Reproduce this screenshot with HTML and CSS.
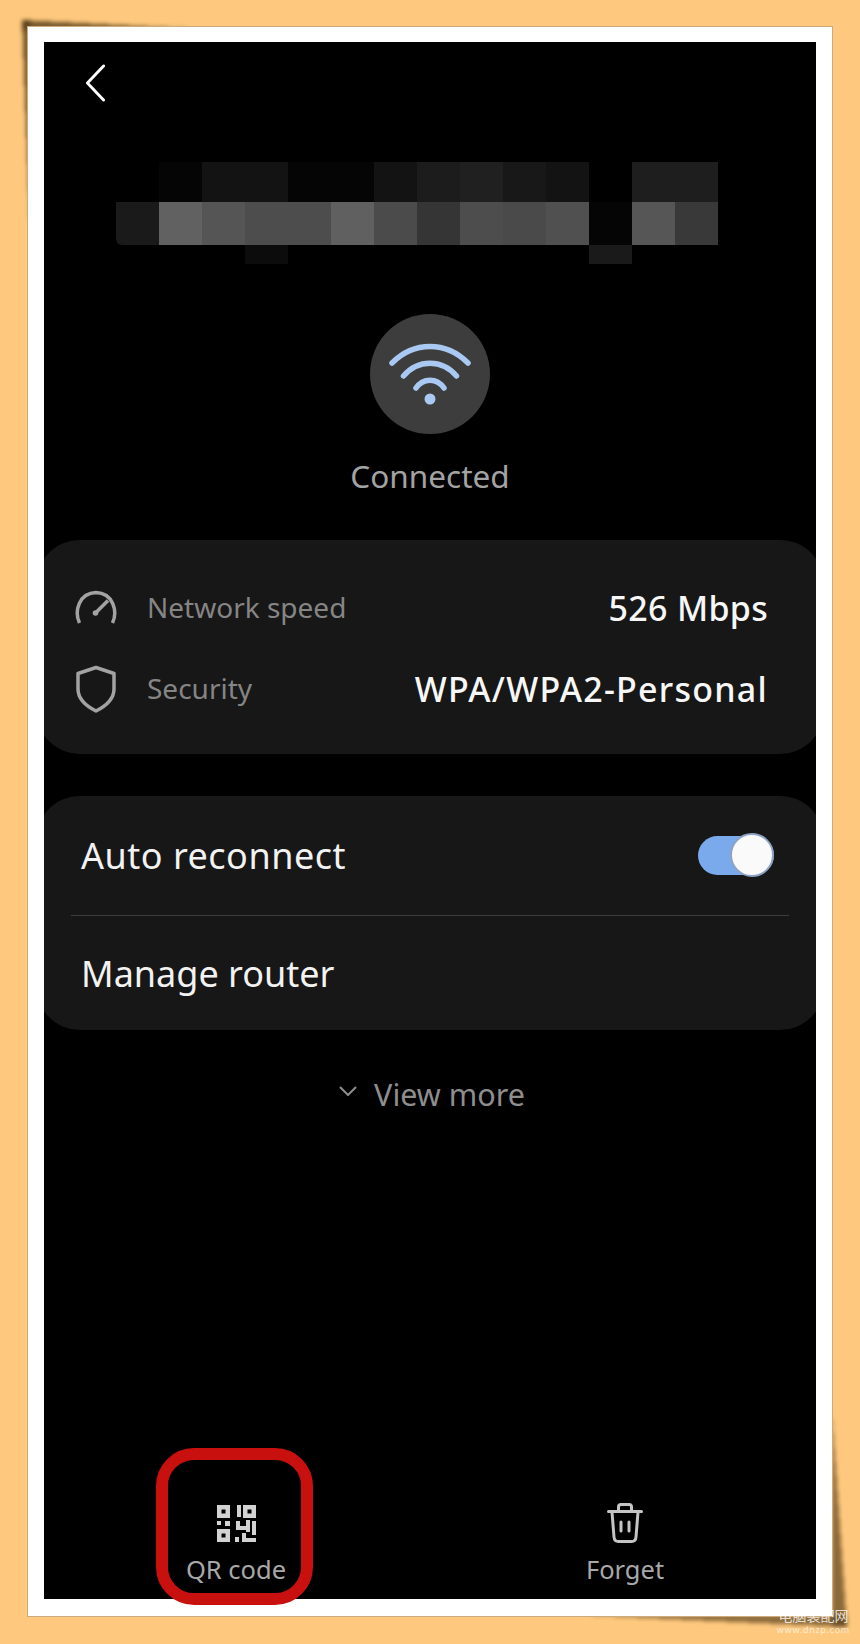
FILE: index.html
```html
<!DOCTYPE html>
<html lang="en">
<head>
<meta charset="utf-8">
<title>Wi-Fi network details</title>
<link rel="stylesheet" href="styles.css">
</head>
<body>
<div class="frame">
  <main class="screen">
    <div class="topbar">
      <svg class="back" viewBox="0 0 22 40" aria-hidden="true"><path d="M20 2 L3 20 L20 38"/></svg>
    </div>
    <div class="mosaic" aria-hidden="true">
      <i></i><i class="a"></i><i class="b"></i><i class="b"></i><i class="a"></i><i class="a"></i><i class="b"></i><i class="c"></i><i class="d"></i><i class="e"></i><i class="b"></i><i></i><i class="f"></i><i class="f"></i>
      <i class="g rl"></i><i class="m1"></i><i class="m2"></i><i class="m3"></i><i class="m3"></i><i class="m4"></i><i class="m5"></i><i class="m6"></i><i class="m3"></i><i class="m7"></i><i class="m8"></i><i class="a"></i><i class="m9"></i><i class="m10"></i>
      <i></i><i></i><i></i><i class="k"></i><i></i><i></i><i></i><i></i><i></i><i></i><i></i><i class="g"></i><i></i><i></i>
    </div>
    <div class="wifi-badge">
      <svg viewBox="0 0 120 120" aria-hidden="true">
        <path d="M22 49 C44 27 76 27 98 49"/>
        <path d="M33.500 62 C48 45 72 45 86.500 62"/>
        <path d="M46 74 C53 63.500 67 63.500 74 74"/>
        <circle cx="60" cy="85" r="5.500"/>
      </svg>
    </div>
    <p class="status">Connected</p>

    <div class="card-clip info-clip">
      <section class="card info">
        <div class="info-row">
          <svg class="info-icon" viewBox="0 0 48 48" aria-hidden="true">
            <path d="M7.500 39 C2 27 7 9 24 8.500 C41 9 46 27 40.500 39"/>
            <path d="M24 28.500 L36 16.500"/>
            <circle cx="23.500" cy="29" r="2.800" class="solid"/>
          </svg>
          <span class="label">Network speed</span>
          <span class="value speed">526 Mbps</span>
        </div>
        <div class="info-row">
          <svg class="info-icon" viewBox="0 0 48 48" aria-hidden="true">
            <path d="M24 2.500 L42 8.500 V24 C42 34 33 41.500 24 46 C15 41.500 6 34 6 24 V8.500 Z"/>
          </svg>
          <span class="label">Security</span>
          <span class="value wide">WPA/WPA2-Personal</span>
        </div>
      </section>
    </div>

    <div class="card-clip options-clip">
      <section class="card options">
        <div class="option first">
          <span class="auto">Auto reconnect</span>
          <span class="toggle"><span class="thumb"></span></span>
        </div>
        <hr class="divider">
        <div class="option second"><span>Manage router</span></div>
      </section>
    </div>

    <div class="more">
      <svg viewBox="0 0 18 10" aria-hidden="true"><path d="M1 1 L9 9 L17 1"/></svg>
      <span>View more</span>
    </div>

    <footer class="actions">
      <div class="action qr">
        <svg class="qr-icon" viewBox="0 0 39 37" aria-hidden="true">
          <path fill-rule="evenodd" d="M0 0H13V13H0ZM4.500 4.500V8.500H8.500V4.500Z"/>
          <path fill-rule="evenodd" d="M26 0H39V13H26ZM30.500 4.500V8.500H34.500V4.500Z"/>
          <path fill-rule="evenodd" d="M0 24H13V37H0ZM4.500 28.500V32.500H8.500V28.500Z"/>
          <path d="M20 0H24V12H20Z"/>
          <path d="M0 16H4V20H0ZM8 16H13V21H8Z"/>
          <path d="M19 16H23V21H29V15H33V27H29V25H19ZM35 16H39V30H35ZM18 32H22V37H18ZM25 28H29V33H39V37H25Z"/>
        </svg>
        <span>QR code</span>
        <span class="ring"></span>
      </div>
      <div class="action forget">
        <svg class="trash" viewBox="0 0 36 40" aria-hidden="true">
          <path d="M1.500 8.500 H34.500"/>
          <path d="M11.500 8 V4 C11.500 2.500 12.500 1.500 14 1.500 H22 C23.500 1.500 24.500 2.500 24.500 4 V8"/>
          <path d="M5 9 L7 34 C7.200 36.800 9 38.500 11.500 38.500 H24.500 C27 38.500 28.800 36.800 29 34 L31 9"/>
          <path d="M14 19 V28 M22 19 V28"/>
        </svg>
        <span>Forget</span>
      </div>
    </footer>
  </main>
</div>
<div class="watermark"><span class="wm-cn">电脑装配网</span><span class="wm-en">www.dnzp.com</span></div>
</body>
</html>
```

FILE: styles.css
```css
html, body { margin: 0; padding: 0; height: 1644px; overflow: hidden; }
body {
  position: relative;
  background: #fec97e;
  padding: 27px 0 0 28px;
  box-sizing: border-box;
  font-family: "Noto Sans", "Liberation Sans", sans-serif;
}
.frame {
  position: relative;
  width: 804px;
  height: 1589px;
  box-sizing: border-box;
  padding: 15px 16px 17px;
  background: #fff;
  box-shadow: 0 0 0 1px #cbab7e;
}
.frame::before {
  content: "";
  position: absolute;
  z-index: -1;
  left: -6px;
  top: -7px;
  width: 180px;
  height: 215px;
  filter: blur(2px);
  background:
    linear-gradient(to top right, rgba(85, 60, 25, .8) 50%, rgba(85, 60, 25, 0) 50%) 0 0 / 175px 9px no-repeat,
    linear-gradient(to bottom left, rgba(85, 60, 25, .8) 50%, rgba(85, 60, 25, 0) 50%) 0 0 / 8px 210px no-repeat;
}
.frame::after {
  content: "";
  position: absolute;
  z-index: -1;
  right: -15px;
  bottom: -11px;
  width: 270px;
  height: 220px;
  filter: blur(2px);
  background:
    linear-gradient(to top right, rgba(90, 65, 30, .7) 50%, rgba(90, 65, 30, 0) 50%) 100% 100% / 15px 215px no-repeat,
    linear-gradient(to bottom left, rgba(90, 65, 30, .7) 50%, rgba(90, 65, 30, 0) 50%) 100% 100% / 265px 12px no-repeat;
}
.screen {
  height: 1557px;
  background: #000;
  display: flex;
  flex-direction: column;
}
.topbar { padding: 22px 0 0 40px; height: 38px; }
.back { display: block; width: 22px; height: 38px; }
.back path { fill: none; stroke: #fff; stroke-width: 3; stroke-linecap: round; stroke-linejoin: round; }

.mosaic {
  margin: 60px 0 0 72px;
  width: 602px;
  display: grid;
  grid-template-columns: repeat(14, 43px);
  grid-template-rows: 40px 43px 19px;
}
.mosaic i { display: block; }
.mosaic .a { background: #050505; }
.mosaic .b { background: #131313; }
.mosaic .c { background: #1c1c1c; }
.mosaic .d { background: #202020; }
.mosaic .e { background: #181818; }
.mosaic .f { background: #1e1e1e; }
.mosaic .g { background: #1a1a1a; }
.mosaic .k { background: #0c0c0c; }
.mosaic .rl { border-bottom-left-radius: 6px; }
.mosaic .m1 { background: #616161; }
.mosaic .m2 { background: #555; }
.mosaic .m3 { background: #4d4d4d; }
.mosaic .m4 { background: #606060; }
.mosaic .m5 { background: #4b4b4b; }
.mosaic .m6 { background: #353535; }
.mosaic .m7 { background: #4a4a4a; }
.mosaic .m8 { background: #505050; }
.mosaic .m9 { background: #565656; }
.mosaic .m10 { background: #393939; }

.wifi-badge {
  width: 120px;
  height: 120px;
  margin: 50px auto 0;
  border-radius: 50%;
  background: #3d3d3d;
}
.wifi-badge svg { display: block; width: 120px; height: 120px; }
.wifi-badge path { fill: none; stroke: #a9c8f2; stroke-width: 5.500; stroke-linecap: round; }
.wifi-badge circle { fill: #a9c8f2; }
.status {
  margin: 20px 0 1px;
  text-align: center;
  font-size: 31.500px;
  line-height: 44px;
  color: #a3a3a3;
}

.card-clip { overflow: hidden; }
.info-clip { margin-top: 41px; }
.options-clip { margin-top: 42px; }
.card { margin: 0 -8px; background: #171717; border-radius: 44px; }
.info { padding: 27px 56px 25px 36px; }
.info-row { display: flex; align-items: center; height: 81px; }
.info-icon { width: 48px; height: 48px; flex: none; }
.info-icon path { fill: none; stroke: #a3a3a3; stroke-width: 3.500; stroke-linecap: butt; stroke-linejoin: round; }
.info-icon .solid { fill: #a3a3a3; }
.label { margin: -2px 0 0 27px; font-size: 28px; color: #858585; }
.value { margin-left: auto; font-size: 34px; font-weight: 500; color: #f7f7f7; }
.speed { letter-spacing: .3px; }
.wide { letter-spacing: 1.250px; }

.option {
  display: flex;
  align-items: center;
  justify-content: space-between;
  padding: 0 50px 0 45px;
  font-size: 36px;
  color: #f2f2f2;
}
.auto { letter-spacing: .5px; }
.first { height: 119px; }
.second { height: 114px; }
.divider { margin: 0 35px; height: 1px; border: 0; background: #3c3c3c; }
.toggle {
  position: relative;
  display: block;
  width: 76px;
  height: 39px;
  border-radius: 20px;
  background: #7aa9ec;
}
.thumb {
  position: absolute;
  right: 0;
  top: -3px;
  width: 44px;
  height: 44px;
  box-sizing: border-box;
  border-radius: 50%;
  background: #fafafa;
  border: 2px solid #8ea3c4;
}

.more {
  margin-top: 44px;
  height: 40px;
  display: flex;
  align-items: center;
  justify-content: center;
  gap: 17px;
  padding-left: 4px;
  font-size: 30.500px;
  color: #8e8e8e;
}
.more svg { width: 18px; height: 10px; margin-top: -6px; }
.more path { fill: none; stroke: #8e8e8e; stroke-width: 2; }

.actions {
  margin-top: auto;
  height: 99px;
  display: grid;
  grid-template-columns: 1fr 1fr;
}
.action {
  position: relative;
  display: flex;
  flex-direction: column;
  align-items: center;
  font-size: 25.500px;
  line-height: 38px;
  color: #a8a8a8;
}
.qr { padding-right: 2px; }
.forget { padding-left: 4px; }
.qr-icon { display: block; width: 39px; height: 37px; margin: 5px 0 8px; fill: #d2d2d2; }
.trash { display: block; width: 36px; height: 40px; margin: 3px 0 7px; }
.trash path { fill: none; stroke: #c4c4c4; stroke-width: 3; stroke-linecap: round; stroke-linejoin: round; }
.ring {
  position: absolute;
  left: 112px;
  top: -52px;
  width: 157px;
  height: 157px;
  box-sizing: border-box;
  border: 12px solid #c8100f;
  border-radius: 38px;
}
.watermark {
  position: absolute;
  right: 10px;
  top: 1607px;
  display: flex;
  flex-direction: column;
  align-items: center;
  color: rgba(255, 255, 255, .8);
}
.wm-cn { font-family: "Noto Sans CJK SC", sans-serif; font-size: 14px; line-height: 17px; }
.wm-en { font-size: 9px; line-height: 12px; letter-spacing: .7px; color: rgba(255, 255, 255, .65); }
```
